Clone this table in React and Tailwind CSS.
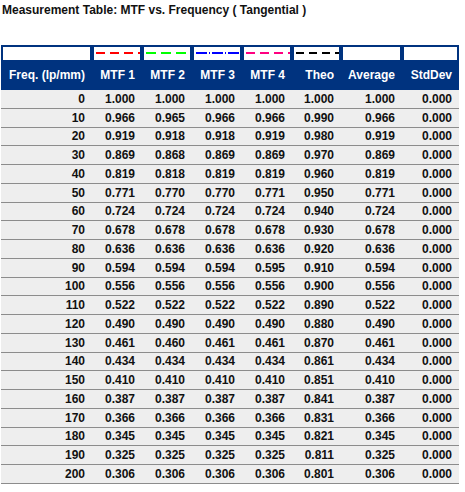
import React from "react";

const rows = [
  ["0", "1.000", "1.000", "1.000", "1.000", "1.000", "1.000"],
  ["10", "0.966", "0.965", "0.966", "0.966", "0.990", "0.966"],
  ["20", "0.919", "0.918", "0.918", "0.919", "0.980", "0.919"],
  ["30", "0.869", "0.868", "0.869", "0.869", "0.970", "0.869"],
  ["40", "0.819", "0.818", "0.819", "0.819", "0.960", "0.819"],
  ["50", "0.771", "0.770", "0.770", "0.771", "0.950", "0.771"],
  ["60", "0.724", "0.724", "0.724", "0.724", "0.940", "0.724"],
  ["70", "0.678", "0.678", "0.678", "0.678", "0.930", "0.678"],
  ["80", "0.636", "0.636", "0.636", "0.636", "0.920", "0.636"],
  ["90", "0.594", "0.594", "0.594", "0.595", "0.910", "0.594"],
  ["100", "0.556", "0.556", "0.556", "0.556", "0.900", "0.556"],
  ["110", "0.522", "0.522", "0.522", "0.522", "0.890", "0.522"],
  ["120", "0.490", "0.490", "0.490", "0.490", "0.880", "0.490"],
  ["130", "0.461", "0.460", "0.461", "0.461", "0.870", "0.461"],
  ["140", "0.434", "0.434", "0.434", "0.434", "0.861", "0.434"],
  ["150", "0.410", "0.410", "0.410", "0.410", "0.851", "0.410"],
  ["160", "0.387", "0.387", "0.387", "0.387", "0.841", "0.387"],
  ["170", "0.366", "0.366", "0.366", "0.366", "0.831", "0.366"],
  ["180", "0.345", "0.345", "0.345", "0.345", "0.821", "0.345"],
  ["190", "0.325", "0.325", "0.325", "0.325", "0.811", "0.325"],
  ["200", "0.306", "0.306", "0.306", "0.306", "0.801", "0.306"],
];

const headers = ["Freq. (lp/mm)", "MTF 1", "MTF 2", "MTF 3", "MTF 4", "Theo", "Average", "StdDev"];

const grid = "grid grid-cols-[87px_46px_46px_46px_46px_45px_57px_53px] gap-x-[4px] px-[2px]";

function Dash({ color, dash }) {
  return (
    <svg width="100%" height="13" className="block" shapeRendering="crispEdges">
      <line x1="2" y1="6" x2="100%" y2="6" stroke={color} strokeWidth="2" strokeDasharray={dash} />
    </svg>
  );
}

export default function App() {
  const legend = [
    null,
    { color: "#ff0000", dash: "9 5" },
    { color: "#00ff00", dash: "10 5" },
    { color: "#0000ff", dash: "11 2 1 2" },
    { color: "#ff0080", dash: "9 5" },
    { color: "#000000", dash: "8 5" },
    null,
    null,
  ];
  return (
    <div className="w-[465px] h-[492px] bg-white overflow-hidden text-black" style={{ fontFamily: '"Liberation Sans", Arial, sans-serif' }}>
      <div className="pl-[2px] pt-[3px] text-[12px] font-bold leading-[14px] text-[#111]">
        Measurement Table: MTF vs. Frequency ( Tangential )
      </div>
      <div className="mt-[28px] w-[458px] ml-[1px]">
        <div className="bg-[#00337f] pt-[2px]">
          <div className={grid}>
            {legend.map((l, i) => (
              <div key={i} className="h-[13px] bg-white">
                {l && <Dash color={l.color} dash={l.dash} />}
              </div>
            ))}
          </div>
          <div className={grid + " h-[30px] items-center"}>
            {headers.map((h) => (
              <div key={h} className="text-right pr-[5px] text-white text-[12px] font-bold whitespace-nowrap">
                {h}
              </div>
            ))}
          </div>
        </div>
        {rows.map((r) => (
          <div key={r[0]} className={grid + " h-[18.75px] items-center bg-[#eeeeee] border-b border-[#8c8c8c]"}>
            {[...r, "0.000"].map((c, i) => (
              <div key={i} className="text-right pr-[5px] text-[12px] font-bold leading-[14px] text-[#111]">
                {c}
              </div>
            ))}
          </div>
        ))}
      </div>
    </div>
  );
}
